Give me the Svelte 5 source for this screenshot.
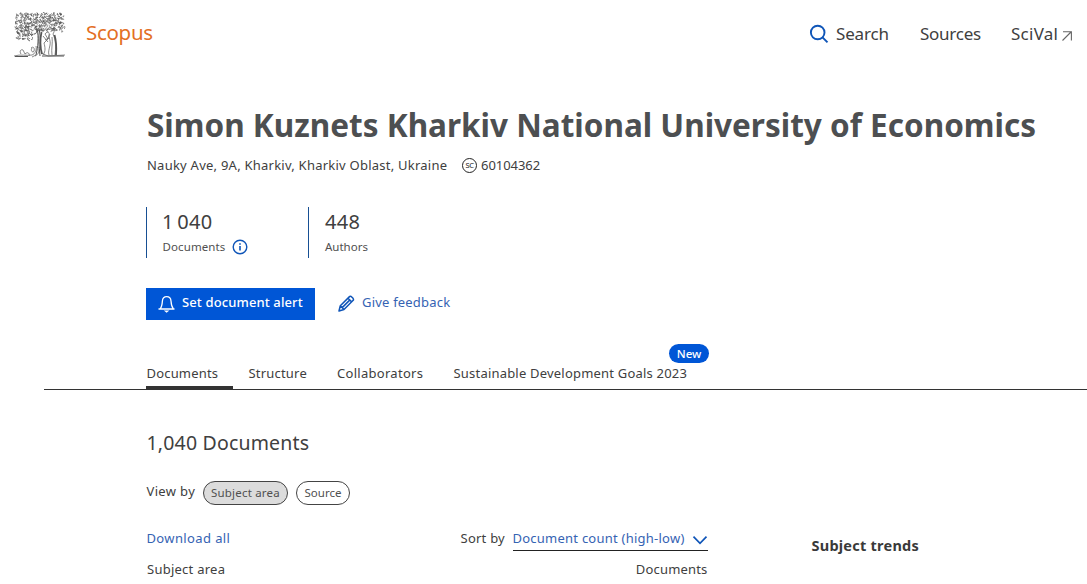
<script>
  // Seeded generator so that the foliage is drawn the same way every time.
  let seed = 7;
  const rnd = () => (seed = (seed * 16807) % 2147483647) / 2147483647;
  const leaf = (x, y) => {
    const d = () => (rnd() * 3.6 - 1.8).toFixed(1);
    return `M${x.toFixed(1)} ${y.toFixed(1)}q${d()} ${d()} ${d()} ${d()}t${d()} ${d()}`;
  };
  let leaves = '';
  for (let y = 1.5; y < 18; y += 2)
    for (let x = 1 + (y % 3); x < 48.5; x += 2.2) leaves += leaf(x + rnd(), y + rnd());
  for (let y = 19; y < 27; y += 2.2)
    for (let x = 3; x < 19; x += 2.4) leaves += leaf(x + rnd(), y + rnd());
</script>

<header>
  <svg class="tree" width="52" height="47" viewBox="0 0 52 47" fill="none" stroke="#555" stroke-width=".7">
    <path d={leaves} />
    <path d="M23 17c2 8 1 18-1 26M26 17c-2 8-1 16 0 27M20 22c3 0 3-3 2-6M30 19c-2 0-3-1-2-3" stroke-width="1" />
    <path d="M27.500 20c-1.500 7-1.500 15 .5 22M40.500 23c2 7 2 14 1.500 20" stroke-width="1.800" />
    <path d="M29 43c3-4 2-8 1-12l4-4-3-5c2-3 5-2 4 1l-1 4M29 24l5 6M37 20c0-3 4-3 3 0l-1 2c3 6 3 14 2 21M36 22c-2 4 1 6 0 11s-2 7-1 10M38 25c1 6-1 12 0 18M35 26l-4 2" />
    <path d="M0 44c7-2 12 0 18-1 3-1 5-5 4-9M22 43l-4 2M25 35c0 5 0 7-4 9M27 41l7 3M34 44l17-1M7 42c-2-3 0-5 2-4l2 4c3-3 5 0 4 2M17 36c2-2 4 0 3 3s-4-1-2-3" />
    <path d="M1 44.500h13M28 44h22" stroke-width="1" />
  </svg>
  <span class="brand">Scopus</span>
  <nav>
    <a class="search">
      <svg width="20" height="20" viewBox="0 0 20 20" fill="none" stroke="#0f55b8" stroke-width="1.900"><circle cx="8.700" cy="8.500" r="6.800" /><path d="M13.500 13.300l5 5" /></svg>
      <span>Search</span>
    </a>
    <a class="sources">Sources</a>
    <a class="scival"><span>SciVal</span>
      <svg width="10" height="10" viewBox="0 0 10 10" fill="none" stroke="#666" stroke-width="1.100"><path d="M.5 9.500L9 1M1 .7h8.400v8.800" /></svg>
    </a>
  </nav>
</header>

<main>
  <h1>Simon Kuznets Kharkiv National University of Economics</h1>
  <div class="address">
    <span class="place">Nauky Ave, 9A, Kharkiv, Kharkiv Oblast, Ukraine</span>
    <span class="sc">SC</span>
    <span class="id">60104362</span>
  </div>

  <section class="metrics">
    <div class="metric">
      <strong>1 040</strong>
      <div class="label"><span>Documents</span>
        <svg width="16" height="16" viewBox="0 0 16 16" fill="none" stroke="#0f55b8"><circle cx="8" cy="8" r="6.800" stroke-width="1.400" /><path d="M8 7v4.500M8 4.300v1.500" stroke-width="1.600" /></svg>
      </div>
    </div>
    <div class="metric authors">
      <strong>448</strong>
      <div class="label">Authors</div>
    </div>
  </section>

  <div class="actions">
    <button>
      <svg width="18" height="18" viewBox="0 0 18 18" fill="none" stroke="#fff" stroke-width="1.300"><path d="M.5 14h16M2.300 13.700C4 11.500 4.200 9 4.400 6c.2-2.700 1.500-4.300 4.300-4.300S12.800 3.300 13 6c.2 3 .5 5.500 2.200 7.700" /><path d="M5.800 15.500h5.600l-2.800 2.200z" fill="#fff" stroke="none" /></svg>
      <span>Set document alert</span>
    </button>
    <a class="feedback">
      <svg width="17" height="17" viewBox="0 0 17 17" fill="none" stroke="#0f55b8" stroke-width="1.500" stroke-linejoin="round"><path d="M1 16l1.300-5.200L11.500 1.600c1.200-1.200 5 2.400 3.700 3.700L6 14.500zM2.300 10.800L6 14.500M10 3.200l3.700 3.700M4.200 12.600l7.500-7.500" /></svg>
      <span>Give feedback</span>
    </a>
  </div>
</main>

<div class="tabs">
  <a class="tab active">Documents</a>
  <a class="tab structure">Structure</a>
  <a class="tab collab">Collaborators</a>
  <a class="tab goals">Sustainable Development Goals 2023<b class="badge">New</b></a>
</div>

<div class="results">
  <div class="left">
    <h2>1,040 Documents</h2>
    <div class="view">
      <span class="viewlabel">View by</span>
      <span class="pill on">Subject area</span>
      <span class="pill source">Source</span>
    </div>
    <div class="bar">
      <a class="link">Download all</a>
      <div class="sort"><span>Sort by</span>
        <div class="select"><span>Document count (high-low)</span>
          <svg width="16" height="10" viewBox="0 0 16 10" fill="none" stroke="#0f55b8" stroke-width="1.700"><path d="M1.500 1.700L8 8.400l6.500-6.700" /></svg>
        </div>
      </div>
    </div>
    <div class="cols"><span class="area">Subject area</span><span class="docs">Documents</span></div>
  </div>
  <h3>Subject trends</h3>
</div>

<style>
  :global(body) { background: #fff; overflow: hidden; }
  :global(#app) { width: 1087px; height: 584px; overflow: hidden; font: 13px/20px "Noto Sans", sans-serif; color: #404040; white-space: nowrap; }
  header { display: flex; height: 70px; }
  .tree { margin: 12px 0 0 14px; flex: none; }
  .brand { margin: 20px 0 0 20px; font-size: 20.500px; line-height: 25px; letter-spacing: -.3px; color: #e36f25; }
  nav { display: flex; margin: 22px 15px 0 auto; font-size: 17px; line-height: 24px; }
  nav a { display: flex; }
  .search { width: 81px; letter-spacing: -.15px; }
  .search svg { flex: none; margin: 2px 7px 0 0; }
  .sources { width: 61px; margin-left: 30px; letter-spacing: -.25px; }
  .scival { margin-left: 30px; letter-spacing: .25px; }
  .scival span { width: 47px; }
  .scival svg { margin: 9px 0 0 4px; }
  main { padding: 35px 0 0 147px; }
  h1 { margin: 0; font-size: 31.500px; line-height: 40px; font-weight: 700; letter-spacing: 0; color: #4d4f51; }
  .address { display: flex; margin-top: 10px; }
  .place { width: 315px; letter-spacing: .24px; }
  .id { letter-spacing: -.05px; }
  .sc { box-sizing: border-box; width: 15px; height: 15px; margin: 3px 4px 0 0; border: 1.500px solid #222; border-radius: 50%; font-size: 7.500px; line-height: 13px; letter-spacing: -.4px; text-align: center; color: #222; }
  .metrics { display: flex; margin: 32px 0 0 -1px; }
  .metric { box-sizing: border-box; width: 162px; height: 51px; border-left: 1px solid #174f93; padding-left: 15px; }
  .authors { padding-left: 16px; }
  strong { display: block; height: 30px; font-weight: 400; font-size: 20px; line-height: 30px; letter-spacing: .3px; word-spacing: -2px; }
  .label { display: flex; padding-left: .5px; font-size: 11.500px; line-height: 20px; letter-spacing: .1px; color: #505050; }
  .authors .label { padding-left: 0; letter-spacing: 0; }
  .label svg { margin: 2px 0 0 7px; }
  .actions { display: flex; margin: 30px 0 0 -1px; }
  button { box-sizing: border-box; display: flex; width: 169px; height: 32px; margin: 0; padding: 4px 0 0 12px; border: 0; background: #0056d6; color: #fff; font: 500 13px/20px "Noto Sans", sans-serif; letter-spacing: .12px; }
  button svg { margin: 3px 6px 0 0; }
  .feedback { display: flex; margin-left: 23px; padding-top: 4px; letter-spacing: .2px; color: #3563b3; }
  .feedback svg { margin: 3px 7px 0 0; }
  .tabs { display: flex; margin: 43px 0 0 44px; padding-left: 102px; height: 26px; border-bottom: 1px solid #333; }
  .tab { height: 23px; padding-left: .5px; }
  .active { box-sizing: border-box; width: 87px; height: 26px; border-bottom: 3px solid #333; letter-spacing: .18px; }
  .structure { margin-left: 15px; width: 88px; letter-spacing: .2px; }
  .collab { width: 116px; letter-spacing: .29px; }
  .goals { position: relative; letter-spacing: .2px; }
  .badge { position: absolute; left: 216px; top: -19px; width: 40px; height: 19px; border-radius: 10px; background: #0056d6; color: #fff; font-size: 11.500px; font-weight: 500; line-height: 19px; letter-spacing: 0; text-align: center; }
  .results { display: flex; padding-left: 146.500px; }
  .left { width: 561px; padding-top: 38px; }
  h2 { margin: 0; font-weight: 400; font-size: 19.500px; line-height: 30px; letter-spacing: .18px; }
  .view { display: flex; margin-top: 23px; }
  .viewlabel { width: 56.500px; letter-spacing: .35px; }
  .pill { box-sizing: border-box; width: 54px; height: 24px; padding-left: 7.500px; border: 1px solid #444; border-radius: 12px; font-size: 11.500px; line-height: 22px; color: #505050; }
  .on { width: 85px; padding-left: 7px; background: #dcdcdc; margin-right: 8px; letter-spacing: .2px; }
  .bar { display: flex; justify-content: space-between; margin-top: 23px; height: 23px; }
  .link, .select { color: #3563b3; }
  .link { letter-spacing: .38px; }
  .sort { display: flex; letter-spacing: .24px; }
  .select { display: flex; justify-content: space-between; width: 195px; margin-left: 7.500px; height: 22px; border-bottom: 1px solid #222; }
  .select svg { margin-top: 7px; }
  .cols { display: flex; justify-content: space-between; margin-top: 8px; }
  .area { letter-spacing: .25px; padding-left: .5px; }
  .docs { letter-spacing: .18px; }
  h3 { margin: 144px 0 0 104px; font-size: 14.500px; line-height: 22px; font-weight: 700; letter-spacing: .24px; color: #3a3a3a; }
</style>
